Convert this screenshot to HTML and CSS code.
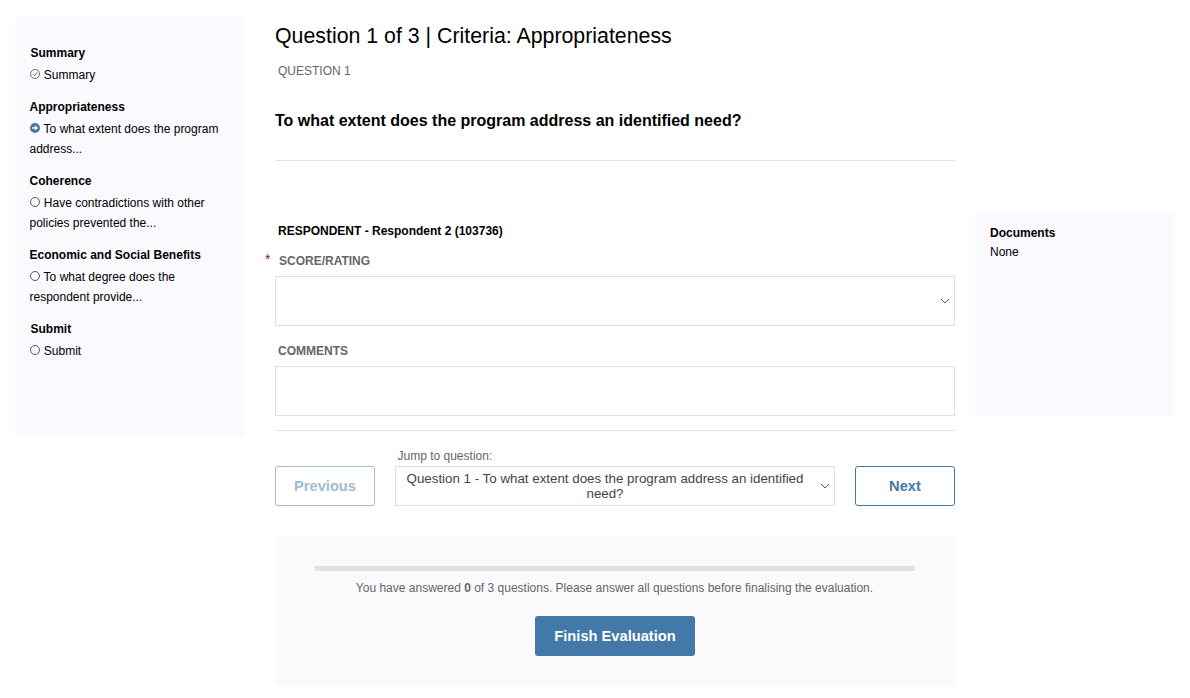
FILE: index.html
```html
<html>
	<head>
		<title>Evaluation</title>
		<link rel="stylesheet" href="styles.css">
	</head>
	<body>
		<div class="page">
			<div class="sidebar">
				<div class="section">
					<h4 class="nudge">Summary</h4>
					<p>
						<svg class="icon" viewBox="0 0 10 10"><circle cx="5" cy="5" r="4.5" fill="none" stroke="#6b6f75" stroke-width="1"/><path d="M2.8 5.1 4.4 6.7 7.3 3.6" fill="none" stroke="#6b6f75" stroke-width="1"/></svg>
						Summary
					</p>
				</div>
				<div class="section">
					<h4>Appropriateness</h4>
					<p>
						<svg class="icon" viewBox="0 0 10 10"><circle cx="5" cy="5" r="5" fill="#4379a8"/><path d="M2.2 4.2H5V2.4L8 5 5 7.6V5.8H2.2Z" fill="#fff"/></svg>
						To what extent does the program address...
					</p>
				</div>
				<div class="section">
					<h4>Coherence</h4>
					<p>
						<svg class="icon" viewBox="0 0 10 10"><circle cx="5" cy="5" r="4.5" fill="none" stroke="#55595f" stroke-width="1"/></svg>
						Have contradictions with other policies prevented the...
					</p>
				</div>
				<div class="section">
					<h4>Economic and Social Benefits</h4>
					<p>
						<svg class="icon" viewBox="0 0 10 10"><circle cx="5" cy="5" r="4.5" fill="none" stroke="#55595f" stroke-width="1"/></svg>
						To what degree does the respondent provide...
					</p>
				</div>
				<div class="section">
					<h4 class="nudge">Submit</h4>
					<p>
						<svg class="icon" viewBox="0 0 10 10"><circle cx="5" cy="5" r="4.5" fill="none" stroke="#55595f" stroke-width="1"/></svg>
						Submit
					</p>
				</div>
			</div>

			<div class="main">
				<h1>Question 1 of 3 | Criteria: Appropriateness</h1>
				<div class="question-no">QUESTION 1</div>
				<h2>To what extent does the program address an identified need?</h2>
				<hr class="rule-top">

				<div class="respondent">RESPONDENT - Respondent 2 (103736)</div>
				<label class="field-label required"><span class="star">*</span>SCORE/RATING</label>
				<div class="select-box score">
					<svg class="chevron" viewBox="0 0 10 6"><path d="M1 1 5 5 9 1" fill="none" stroke="#555" stroke-width="1"/></svg>
				</div>
				<label class="field-label comments">COMMENTS</label>
				<div class="text-box"></div>
				<hr class="rule-bottom">

				<div class="nav-row">
					<a class="btn btn-prev" href="#">Previous</a>
					<div class="jump">
						<div class="jump-label">Jump to question:</div>
						<div class="select-box jump-select">
							<span>Question 1 - To what extent does the program address an identified need?</span>
							<svg class="chevron" viewBox="0 0 10 6"><path d="M1 1 5 5 9 1" fill="none" stroke="#555" stroke-width="1"/></svg>
						</div>
					</div>
					<a class="btn btn-next" href="#">Next</a>
				</div>

				<div class="finish">
					<div class="progress"></div>
					<p>You have answered <b>0</b> of 3 questions. Please answer all questions before finalising the evaluation.</p>
					<a class="btn-finish" href="#">Finish Evaluation</a>
				</div>
			</div>

			<div class="documents">
				<h4>Documents</h4>
				<p>None</p>
			</div>
		</div>
	</body>
</html>
```

FILE: styles.css
```css
html, body {
	margin: 0;
	padding: 0;
	background-color: #fff;
}

body {
	font-family: "Liberation Sans", Arial, sans-serif;
	font-size: 12px;
	color: #000;
}

.page {
	display: flex;
	align-items: flex-start;
	padding: 16px 15px 12px 15px;
}

h1, h2, h4, p {
	margin: 0;
}

/* left nav */
.sidebar {
	box-sizing: border-box;
	flex: none;
	width: 230px;
	height: 420px;
	margin-right: 30px;
	padding: 27px 15px 0 14.5px;
	background-color: #f9f9fe;
	border-radius: 5px;
}

.section {
	margin-bottom: 12px;
}

.section h4 {
	font-size: 12px;
	line-height: 20px;
	margin-bottom: 2px;
}

.section h4.nudge {
	margin-left: 1px;
}

.section p {
	line-height: 20px;
}

.icon {
	width: 10px;
	height: 10px;
	margin-left: .5px;
	margin-right: .5px;
	vertical-align: 0;
}

/* question column */
.main {
	flex: none;
	width: 680px;
}

h1 {
	font-size: 21.33px;
	font-weight: normal;
	line-height: 40px;
}

.question-no {
	margin: 8px 0 0 3px;
	line-height: 14px;
	color: #666;
}

h2 {
	margin-top: 33px;
	font-size: 16px;
	line-height: 20px;
}

hr {
	border: 0;
	height: 1px;
	background-color: #e4e4e4;
	margin: 0;
}

.rule-top {
	margin-top: 29px;
}

.respondent {
	margin: 62px 0 0 3px;
	font-weight: bold;
	line-height: 16px;
}

.field-label {
	display: block;
	font-weight: bold;
	color: #666;
	line-height: 16px;
}

.required {
	position: relative;
	margin: 14px 0 0 4px;
}

.star {
	position: absolute;
	left: -14px;
	top: -2px;
	color: #8a1c1c;
	font-weight: normal;
	font-size: 14px;
}

.comments {
	margin: 17px 0 0 3px;
}

.select-box, .text-box {
	box-sizing: border-box;
	border: 1px solid #e0e0e0;
	background-color: #fff;
}

.score {
	position: relative;
	height: 50px;
	margin-top: 7px;
}

.text-box {
	height: 50px;
	margin-top: 7px;
}

.chevron {
	position: absolute;
	right: 4px;
	top: 21px;
	width: 10px;
	height: 6px;
}

.rule-bottom {
	margin-top: 14px;
}

/* previous / jump / next */
.nav-row {
	display: flex;
	align-items: flex-end;
	margin-top: 18px;
}

.btn {
	box-sizing: border-box;
	flex: none;
	width: 100px;
	height: 40px;
	border: 1px solid #4379a8;
	border-radius: 3px;
	font-size: 14.67px;
	font-weight: bold;
	line-height: 38px;
	text-align: center;
	text-decoration: none;
	color: #4379a8;
}

.btn-prev {
	opacity: .5;
}

.jump {
	flex: none;
	width: 440px;
	margin: 0 20px;
}

.jump-label {
	margin-left: 2.5px;
	line-height: 14px;
	color: #666;
}

.jump-select {
	position: relative;
	height: 40px;
	margin-top: 3px;
	padding: 4px 29px 0 9px;
	text-align: center;
	line-height: 15px;
	font-size: 13.33px;
	color: #444;
}

.jump-select .chevron {
	right: 4px;
	top: 16px;
}

/* finish panel */
.finish {
	box-sizing: border-box;
	height: 150px;
	margin-top: 30px;
	padding: 30px 40px 0 40px;
	background-color: #fafafc;
	border-radius: 5px;
	text-align: center;
}

.progress {
	height: 5px;
	background-color: #e1e1e3;
}

.finish p {
	margin-top: 9px;
	margin-right: 1px;
	line-height: 16px;
	color: #666;
}

.btn-finish {
	display: block;
	width: 160px;
	height: 40px;
	margin: 20px auto 0 auto;
	background-color: #4379a8;
	border-radius: 3px;
	color: #fff;
	font-size: 14.67px;
	font-weight: bold;
	line-height: 40px;
	text-decoration: none;
}

/* right panel */
.documents {
	box-sizing: border-box;
	flex: none;
	width: 200px;
	height: 205px;
	margin: 195px 0 0 20px;
	padding: 14px 15px 0 15px;
	background-color: #f9f9fe;
}

.documents h4 {
	font-size: 12px;
	line-height: 16px;
}

.documents p {
	margin-top: 3px;
	line-height: 16px;
}
```
